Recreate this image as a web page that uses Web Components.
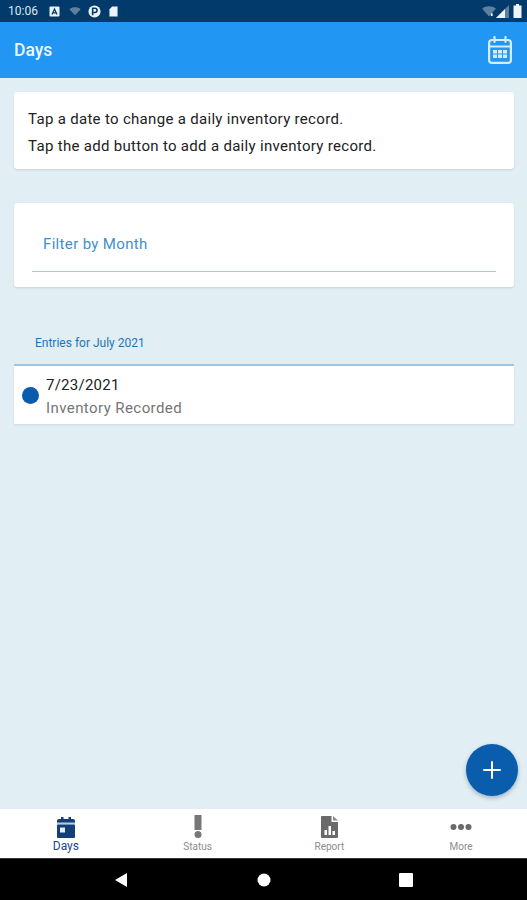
<!DOCTYPE html>
<html>
<head>
<meta charset="utf-8">
<title>Days</title>
<style>
html,body{margin:0;padding:0;height:100%;}
body{font-family:Roboto,"Liberation Sans",sans-serif;background:#e1eef4;}
</style>
</head>
<body>
<days-app></days-app>
<script>
//barra de estado de android
class StatusBar extends HTMLElement{
  constructor(){
    super();
    this.attachShadow({mode:"open"});
    this.shadowRoot.innerHTML=`
      <style>
        :host{display:flex;align-items:center;height:22px;flex:none;background:#013a6b;color:#dfe8f0;font-size:12px;padding:0 5px 0 8px;box-sizing:border-box;}
        .time{width:32px;}
        .left{display:flex;align-items:center;gap:9px;flex:1;}
        .right{display:flex;align-items:center;}
        svg{display:block;}
      </style>
      <div class="left">
        <span class="time">10:06</span>
        <svg width="11" height="11" viewBox="0 0 11 11"><rect x="0.5" y="0.5" width="10" height="10" rx="1" fill="#eef3f7"/><path d="M3 8.5 5.5 3 8 8.5M4 6.8h3" fill="none" stroke="#013a6b" stroke-width="1.3"/></svg>
        <svg width="12" height="10" viewBox="0 0 16 12"><path d="M0.5 3.5C4.5 0 11.5 0 15.5 3.5L8 11.5Z" fill="#5f7f9c"/></svg>
        <svg width="13" height="13" viewBox="0 0 14 14" style="margin-left:-2px"><circle cx="7" cy="7" r="6.5" fill="#eef3f7"/><path d="M5 11V3.5h2.5a2 2 0 0 1 0 4.5H5" fill="none" stroke="#013a6b" stroke-width="1.7"/></svg>
        <svg width="9" height="11" viewBox="0 0 10 12" style="margin-left:-1px"><path d="M3.5 0.5H9.5V11.5H0.5V3.5Z" fill="#eef3f7"/></svg>
      </div>
      <div class="right">
        <svg width="14" height="11" viewBox="0 0 15 12"><path d="M0 3C4 -0.5 11 -0.5 15 3L7.5 11.5Z" fill="#5f7f9c"/><rect x="9.5" y="8" width="2" height="3" fill="#eef3f7"/></svg>
        <svg width="13" height="13" viewBox="0 0 13 13"><path d="M0 13 13 0V13Z" fill="#5f7f9c"/><path d="M0 13 9 4V13Z" fill="#eef3f7"/></svg>
        <svg width="9" height="14" viewBox="0 0 9 14" style="margin-left:4px"><path d="M3 0h3v1.5h2.5V14H.5V1.5H3Z" fill="#eef3f7"/></svg>
      </div>`;
  }
}
customElements.define("status-bar",StatusBar);

//cabecera azul con el titulo
class AppHeader extends HTMLElement{
  constructor(){
    super();
    this.attachShadow({mode:"open"});
    this.shadowRoot.innerHTML=`
      <style>
        :host{display:flex;align-items:center;justify-content:space-between;height:56px;flex:none;background:#2196f3;color:#fff;padding:0 15px 0 14px;box-sizing:border-box;}
        h1{margin:0;font-size:17.5px;font-weight:500;color:#eef7fe;}
        svg{display:block;}
      </style>
      <h1><slot></slot></h1>
      <svg width="24" height="28" viewBox="0 0 24 28" fill="none" stroke="#d5ecfd" stroke-width="2.2">
        <rect x="1.1" y="4" width="21.8" height="22.9" rx="3"/>
        <path d="M1 10.5h22M6.5 1v5M17.5 1v5" stroke-linecap="round"/>
        <path d="M5 14h4v3.5H5zM10 14h4v3.5h-4zM15 14h4v3.5h-4zM5 18.5h4V22H5zM10 18.5h4V22h-4zM15 18.5h4V22h-4z" fill="#d5ecfd" stroke="none"/>
      </svg>`;
  }
}
customElements.define("app-header",AppHeader);

//tarjeta blanca
class InfoCard extends HTMLElement{
  constructor(){
    super();
    this.attachShadow({mode:"open"});
    this.shadowRoot.innerHTML=`
      <style>
        :host{display:block;background:#fff;border-radius:3px;box-shadow:0 1px 2px rgba(60,90,110,.18);}
      </style>
      <slot></slot>`;
  }
}
customElements.define("info-card",InfoCard);

//campo de filtro
class FilterField extends HTMLElement{
  constructor(){
    super();
    this.attachShadow({mode:"open"});
    this.shadowRoot.innerHTML=`
      <style>
        :host{display:block;padding:0 18px 15px;}
        .box{height:69px;box-sizing:border-box;padding:32px 11px 0;border-bottom:1px solid #9fcbee;color:#3f8fcf;font-size:15px;line-height:18px;letter-spacing:.34px;}
      </style>
      <div class="box"><slot></slot></div>`;
  }
}
customElements.define("filter-field",FilterField);

//fila de la lista
class EntryRow extends HTMLElement{
  constructor(){
    super();
    this.attachShadow({mode:"open"});
    this.shadowRoot.innerHTML=`
      <style>
        :host{display:flex;align-items:center;height:58px;box-sizing:border-box;background:#fff;box-shadow:0 1px 2px rgba(60,90,110,.12);}
        .dot{width:17px;height:17px;border-radius:50%;background:#0a5cad;margin:0 7px 0 8px;flex:none;}
        .date{font-size:15px;line-height:20px;color:#222;letter-spacing:.25px;position:relative;top:1px;}
        .sub{font-size:15px;line-height:20px;color:#757575;margin-top:3px;letter-spacing:.42px;position:relative;top:1px;}
      </style>
      <div class="dot"></div>
      <div>
        <div class="date"><slot name="date"></slot></div>
        <div class="sub"><slot name="sub"></slot></div>
      </div>`;
  }
}
customElements.define("entry-row",EntryRow);

//boton de una pestana
class TabItem extends HTMLElement{
  constructor(){
    super();
    this.attachShadow({mode:"open"});
    this.shadowRoot.innerHTML=`
      <style>
        :host{display:flex;flex-direction:column;align-items:center;flex:1;color:#8c8c8c;font-size:10px;padding-top:5px;box-sizing:border-box;}
        :host([active]){color:#1a4a80;font-size:12px;}
        .icon{height:25px;display:flex;align-items:center;justify-content:center;}
        .label{line-height:13px;margin-top:1px;}
        :host([active]) .label{margin-top:0;line-height:14px;}
      </style>
      <div class="icon"><slot name="icon"></slot></div>
      <div class="label"><slot></slot></div>`;
  }
}
customElements.define("tab-item",TabItem);

//barra de navegacion inferior
class TabBar extends HTMLElement{
  constructor(){
    super();
    this.attachShadow({mode:"open"});
    this.shadowRoot.innerHTML=`
      <style>
        :host{display:flex;height:49px;flex:none;background:#fff;}
      </style>
      <slot></slot>`;
  }
}
customElements.define("tab-bar",TabBar);

//botones del sistema
class NavBar extends HTMLElement{
  constructor(){
    super();
    this.attachShadow({mode:"open"});
    this.shadowRoot.innerHTML=`
      <style>
        :host{display:flex;height:42px;flex:none;background:#000;align-items:center;justify-content:center;gap:128px;border-top:1px solid #333;box-sizing:border-box;}
        svg{display:block;}
      </style>
      <svg width="14" height="14" viewBox="0 0 14 14"><path d="M0 7 12 0V14Z" fill="#fff"/></svg>
      <svg width="14" height="14" viewBox="0 0 14 14"><circle cx="7" cy="7" r="6.5" fill="#fff"/></svg>
      <svg width="14" height="14" viewBox="0 0 14 14"><rect width="14" height="14" rx="1" fill="#fff"/></svg>`;
  }
}
customElements.define("nav-bar",NavBar);

//boton flotante
class FabButton extends HTMLElement{
  constructor(){
    super();
    this.attachShadow({mode:"open"});
    this.shadowRoot.innerHTML=`
      <style>
        :host{position:absolute;right:9px;bottom:13px;width:52px;height:52px;border-radius:50%;background:#0a5cad;display:flex;align-items:center;justify-content:center;box-shadow:0 2px 4px rgba(0,40,90,.3);}
        svg{display:block;}
      </style>
      <svg width="18" height="18" viewBox="0 0 18 18"><path d="M9 1v16M1 9h16" stroke="#fff" stroke-width="2" stroke-linecap="round"/></svg>`;
  }
}
customElements.define("fab-button",FabButton);

//pantalla completa
class DaysApp extends HTMLElement{
  constructor(){
    super();
    this.attachShadow({mode:"open"});
    this.shadowRoot.innerHTML=`
      <style>
        :host{display:flex;flex-direction:column;height:900px;overflow:hidden;background:#e1eef4;font-family:Roboto,"Liberation Sans",sans-serif;}
        main{flex:1;position:relative;padding:14px 13px 0 14px;display:flex;flex-direction:column;}
        .intro{padding:14px 14px 13px;font-size:15px;line-height:27px;color:#222;letter-spacing:.31px;height:77px;box-sizing:border-box;}
        .intro p{margin:0;}
        .filter{margin-top:34px;}
        .title{margin:48px 0 0;padding:1px 21px 0;height:31px;font-size:12px;line-height:14px;font-weight:400;color:#1f74b8;border-bottom:2px solid #a3c6e8;box-sizing:border-box;}
        svg{display:block;}
      </style>
      <status-bar></status-bar>
      <app-header>Days</app-header>
      <main>
        <info-card class="intro">
          <p>Tap a date to change a daily inventory record.</p>
          <p>Tap the add button to add a daily inventory record.</p>
        </info-card>
        <info-card class="filter"><filter-field>Filter by Month</filter-field></info-card>
        <div class="title">Entries for July 2021</div>
        <entry-row>
          <span slot="date">7/23/2021</span>
          <span slot="sub">Inventory Recorded</span>
        </entry-row>
        <fab-button></fab-button>
      </main>
      <tab-bar>
        <tab-item active>
          <svg slot="icon" width="18" height="22" viewBox="0 0 18 22"><path d="M0 5a2 2 0 0 1 2-2h2V1h2.5v2h5V1H14v2h2a2 2 0 0 1 2 2v3H0Z" fill="#123f78"/><rect y="6.5" width="18" height="2" fill="#b9cbdc"/><rect y="8.5" width="18" height="13.5" rx="1" fill="#123f78"/><rect x="3" y="11.5" width="5" height="5" fill="#e6edf4"/></svg>
          Days
        </tab-item>
        <tab-item>
          <svg slot="icon" width="8" height="23" viewBox="0 0 8 23"><path d="M.5 0h7v15h-7Z" fill="#777"/><circle cx="4" cy="19.5" r="3.5" fill="#777"/></svg>
          Status
        </tab-item>
        <tab-item>
          <svg slot="icon" width="17" height="22" viewBox="0 0 17 22"><path d="M0 1a1 1 0 0 1 1-1h9.5v6H17v15a1 1 0 0 1-1 1H1a1 1 0 0 1-1-1Z" fill="#6a6a6a"/><path d="M12 0l5 4.5h-5Z" fill="#8a8a8a"/><path d="M3.5 14h2.5v5H3.5ZM7.5 10h2.5v9H7.5ZM11.5 15h2.5v4H11.5Z" fill="#fff"/></svg>
          Report
        </tab-item>
        <tab-item>
          <svg slot="icon" width="22" height="8" viewBox="0 0 22 8"><circle cx="3.5" cy="4" r="3" fill="#6a6a6a"/><circle cx="11" cy="4" r="3" fill="#6a6a6a"/><circle cx="18.5" cy="4" r="3" fill="#6a6a6a"/></svg>
          More
        </tab-item>
      </tab-bar>
      <nav-bar></nav-bar>`;
  }
}
customElements.define("days-app",DaysApp);
</script>
</body>
</html>
